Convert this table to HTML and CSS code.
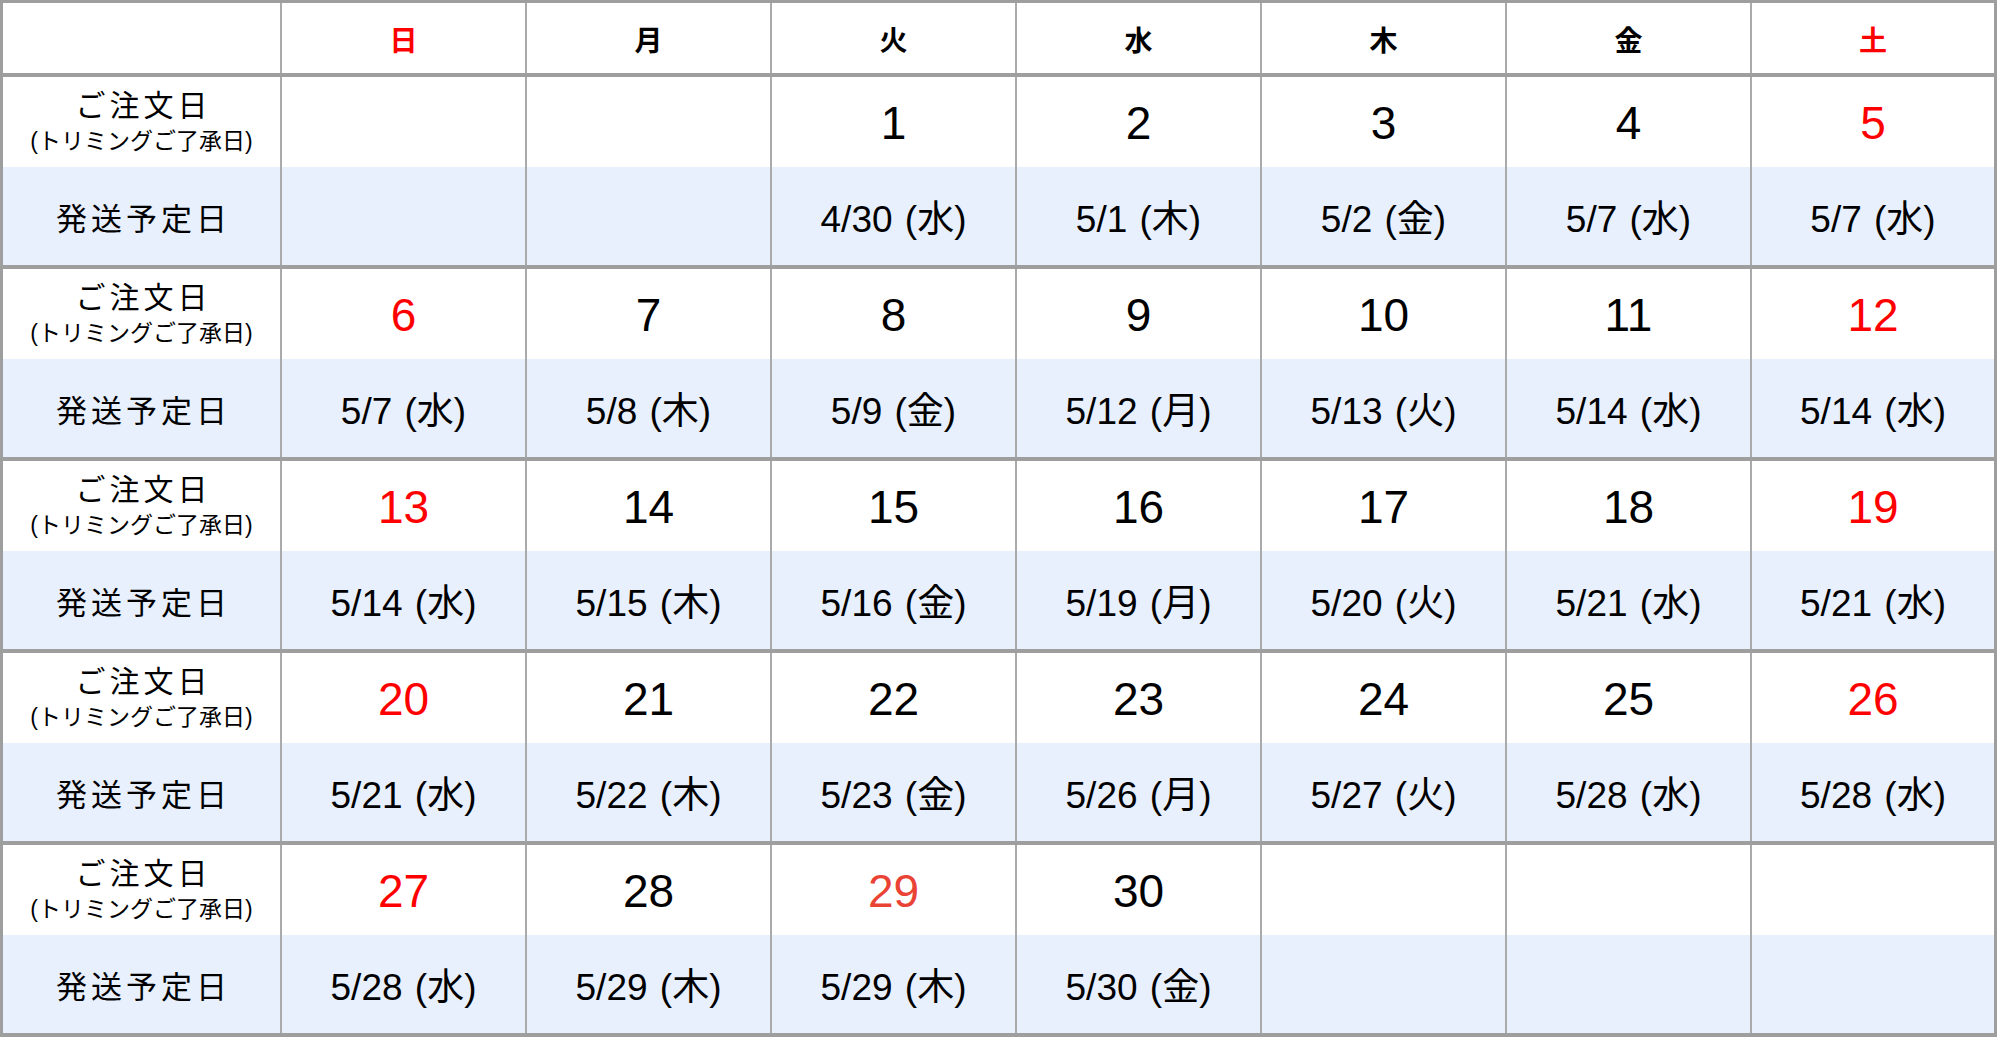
FILE: index.html
```html
<!DOCTYPE html>
<html lang="ja">
<head>
<meta charset="utf-8">
<title>発送予定カレンダー</title>
<link rel="stylesheet" href="styles.css">
</head>
<body>
<div class="calendar">
  <div class="head">
    <div class="hcell"></div>
    <div class="hcell red">日</div>
    <div class="hcell">月</div>
    <div class="hcell">火</div>
    <div class="hcell">水</div>
    <div class="hcell">木</div>
    <div class="hcell">金</div>
    <div class="hcell red">土</div>
  </div>

  <div class="week">
    <div class="label order"><span class="l1">ご注文日</span><span class="l2">(トリミングご了承日)</span></div>
    <div class="day"></div><div class="day"></div>
    <div class="day">1</div><div class="day">2</div><div class="day">3</div><div class="day">4</div><div class="day red">5</div>
    <div class="label ship">発送予定日</div>
    <div class="sd"></div><div class="sd"></div>
    <div class="sd">4/30 (水)</div><div class="sd">5/1 (木)</div><div class="sd">5/2 (金)</div><div class="sd">5/7 (水)</div><div class="sd">5/7 (水)</div>
  </div>

  <div class="week">
    <div class="label order"><span class="l1">ご注文日</span><span class="l2">(トリミングご了承日)</span></div>
    <div class="day red">6</div><div class="day">7</div><div class="day">8</div><div class="day">9</div><div class="day">10</div><div class="day">11</div><div class="day red">12</div>
    <div class="label ship">発送予定日</div>
    <div class="sd">5/7 (水)</div><div class="sd">5/8 (木)</div><div class="sd">5/9 (金)</div><div class="sd">5/12 (月)</div><div class="sd">5/13 (火)</div><div class="sd">5/14 (水)</div><div class="sd">5/14 (水)</div>
  </div>

  <div class="week">
    <div class="label order"><span class="l1">ご注文日</span><span class="l2">(トリミングご了承日)</span></div>
    <div class="day red">13</div><div class="day">14</div><div class="day">15</div><div class="day">16</div><div class="day">17</div><div class="day">18</div><div class="day red">19</div>
    <div class="label ship">発送予定日</div>
    <div class="sd">5/14 (水)</div><div class="sd">5/15 (木)</div><div class="sd">5/16 (金)</div><div class="sd">5/19 (月)</div><div class="sd">5/20 (火)</div><div class="sd">5/21 (水)</div><div class="sd">5/21 (水)</div>
  </div>

  <div class="week">
    <div class="label order"><span class="l1">ご注文日</span><span class="l2">(トリミングご了承日)</span></div>
    <div class="day red">20</div><div class="day">21</div><div class="day">22</div><div class="day">23</div><div class="day">24</div><div class="day">25</div><div class="day red">26</div>
    <div class="label ship">発送予定日</div>
    <div class="sd">5/21 (水)</div><div class="sd">5/22 (木)</div><div class="sd">5/23 (金)</div><div class="sd">5/26 (月)</div><div class="sd">5/27 (火)</div><div class="sd">5/28 (水)</div><div class="sd">5/28 (水)</div>
  </div>

  <div class="week">
    <div class="label order"><span class="l1">ご注文日</span><span class="l2">(トリミングご了承日)</span></div>
    <div class="day red">27</div><div class="day">28</div><div class="day holiday">29</div><div class="day">30</div><div class="day"></div><div class="day"></div><div class="day"></div>
    <div class="label ship">発送予定日</div>
    <div class="sd">5/28 (水)</div><div class="sd">5/29 (木)</div><div class="sd">5/29 (木)</div><div class="sd">5/30 (金)</div><div class="sd"></div><div class="sd"></div><div class="sd"></div>
  </div>
</div>
</body>
</html>
```

FILE: styles.css
```css
html, body {
  margin: 0;
  padding: 0;
  background: #ffffff;
}

body {
  font-family: "Liberation Sans", "Noto Sans CJK JP", sans-serif;
  color: #000000;
}

.calendar {
  width: 1991px;
  border: 3px solid #9e9e9e;
  border-bottom-width: 4px;
  background: #ffffff;
}

.head,
.week {
  display: grid;
  grid-template-columns: 277px repeat(6, 243px) 1fr;
  column-gap: 2px;
  background: #aaaaaa;
}

.head {
  grid-template-rows: 70px;
}

.week {
  grid-template-rows: 90px 98px;
  border-top: 4px solid #9e9e9e;
}

.hcell {
  background: #ffffff;
  display: flex;
  align-items: center;
  justify-content: center;
  padding-top: 1px;
  box-sizing: border-box;
  font-family: "Noto Sans CJK JP", sans-serif;
  font-weight: 700;
  font-size: 28px;
}

.day {
  background: #ffffff;
  display: flex;
  align-items: center;
  justify-content: center;
  font-size: 46px;
  padding-top: 2px;
  box-sizing: border-box;
}

.sd {
  background: #e8f0fe;
  display: flex;
  align-items: center;
  justify-content: center;
  font-size: 37px;
  word-spacing: 2px;
  padding-top: 0;
  box-sizing: border-box;
}

.label {
  display: flex;
  flex-direction: column;
  align-items: center;
  justify-content: center;
  font-family: "Noto Sans CJK JP", sans-serif;
  font-weight: 400;
  box-sizing: border-box;
}

.label.order {
  background: #ffffff;
  padding-bottom: 3px;
}

.label.ship {
  background: #e8f0fe;
  font-size: 31px;
  letter-spacing: 4px;
  padding-top: 0;
  padding-left: 4px;
}

.l1 {
  font-size: 30px;
  letter-spacing: 4px;
  line-height: 36px;
  padding-left: 4px;
}

.l2 {
  font-family: "Liberation Sans", "Noto Sans CJK JP", sans-serif;
  font-size: 23px;
  letter-spacing: 0;
  line-height: 30px;
  margin-top: 5px;
}

.red {
  color: #ff0000;
}

.holiday {
  color: #ea4335;
}
```
